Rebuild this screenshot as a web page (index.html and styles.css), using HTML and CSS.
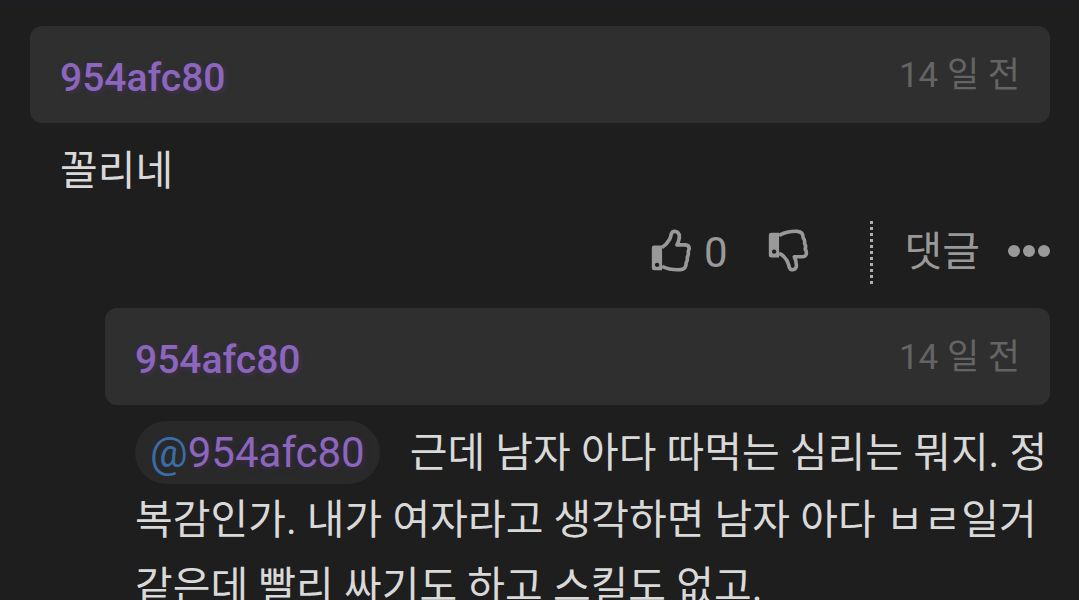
FILE: index.html
```html
<!DOCTYPE html>
<html lang="ko">
<head>
    <meta charset="UTF-8">
    <meta name="viewport" content="width=device-width, initial-scale=1.0">
    <title>댓글</title>
    <link rel="stylesheet" href="styles.css">
</head>
<body>

<main class="comments">
    <!-- Comment -->
    <article class="comment">
        <header class="comment-header">
            <a href="#" class="author">954afc80</a>
            <time class="date">14 일 전</time>
        </header>
        <p class="comment-text">꼴리네</p>
        <div class="actions">
            <button type="button" class="vote" aria-label="추천">
                <svg class="thumb" viewBox="33 55 123 130" aria-hidden="true">
                    <path class="cuff" fill-rule="evenodd" d="M42 105H66V180H42Q35 180 35 173V112Q35 105 42 105ZM51 157a6.500 6.500 0 1 0 .1 0Z"/>
                    <path class="hand" d="M66 111Q79 103 89 86Q92 80 94 69Q97 62 104 62Q120 64 118 82Q117 91 111 103H136Q148 104 148 114L145 124Q147 131 142 141Q144 148 139 157Q139 177 122 178Q91 180 66 168"/>
                </svg>
                <span>0</span>
            </button>
            <button type="button" class="vote" aria-label="비추천">
                <svg class="thumb" viewBox="382 55 123 130" aria-hidden="true">
                    <path class="cuff" fill-rule="evenodd" d="M391 66H415V141H391Q384 141 384 134V73Q384 66 391 66ZM400 117a6.500 6.500 0 1 0 .1 0Z"/>
                    <path class="hand" d="M415 74Q440 61 470 62Q488 63 488 82Q494 88 492 99Q497 106 494 116Q499 123 497 131Q495 138 485 139H461Q469 154 467 170Q464 179 453 178Q446 177 444 163Q440 149 430 139Q423 131 415 129"/>
                </svg>
            </button>
            <div class="links">
                <button type="button" class="reply-button">댓글</button>
                <button type="button" class="more" aria-label="더보기">
                    <svg viewBox="0 0 42 12" aria-hidden="true">
                        <circle cx="6" cy="6" r="6"/>
                        <circle cx="21" cy="6" r="6"/>
                        <circle cx="36" cy="6" r="6"/>
                    </svg>
                </button>
            </div>
        </div>
    </article>

    <!-- Reply -->
    <article class="comment reply">
        <header class="comment-header">
            <a href="#" class="author">954afc80</a>
            <time class="date">14 일 전</time>
        </header>
        <p class="comment-text"><a href="#" class="mention">@<span>954afc80</span></a>근데 남자 아다 따먹는 심리는 뭐지. 정복감인가. 내가 여자라고 생각하면 남자 아다 ㅂㄹ일거 같은데 빨리 싸기도 하고 스킬도 없고.</p>
    </article>
</main>

</body>
</html>
```

FILE: styles.css
```css
html {
    scrollbar-width: none;
}
body {
    margin: 0;
    background: #1e1e1e;
    color: #d9d9d9;
    font-family: Roboto, 'Noto Sans CJK KR', sans-serif;
    font-size: 41px;
    line-height: 67px;
    border-top: 2px solid #1b1f24;
}
a {
    text-decoration: none;
}
button {
    margin: 0;
    padding: 0;
    border: none;
    background: none;
    color: inherit;
    font: inherit;
    line-height: 63px;
    cursor: pointer;
}

.comments {
    padding: 24px 29px 0 30px;
}
.comment-header {
    display: flex;
    align-items: center;
    justify-content: space-between;
    height: 97px;
    padding: 0 30px;
    border-radius: 12px;
    background: #2f2f2f;
}
.author {
    padding-top: 8px;
    color: #8c66bd;
    font-size: 39px;
    font-weight: 500;
    text-shadow: 2px 2px 5px #41324f;
}
.date {
    padding-top: 2px;
    color: #646464;
    font-size: 35px;
}
.comment-text {
    margin: 0;
    padding: 15px 0 0 30px;
    word-break: break-all;
}

/* Votes and links */
.actions {
    display: flex;
    align-items: center;
    justify-content: flex-end;
    margin-top: 16px;
    color: #999999;
}
.vote {
    display: flex;
    align-items: center;
    gap: 12px;
    margin-right: 40px;
    font-size: 42px;
}
.thumb {
    width: 41px;
    height: 43px;
    margin-bottom: 4px;
}
.cuff {
    fill: #999999;
}
.hand {
    fill: none;
    stroke: #999999;
    stroke-width: 11px;
    stroke-linejoin: round;
}
.links {
    display: flex;
    align-items: center;
    gap: 28px;
    height: 63px;
    margin-left: 21px;
    padding-left: 32px;
    border-left: 3px dotted #b0b0b0;
}
.more {
    display: flex;
    padding-bottom: 4px;
}
.more svg {
    width: 42px;
    height: 12px;
    fill: #999999;
}

.reply {
    margin-top: 24px;
    padding-left: 75px;
}
.mention {
    margin-right: 30px;
    padding: 7px 15px;
    border-radius: 32px;
    background: #292929;
    color: #3a6ca8;
}
.reply .comment-text {
    padding-top: 14px;
}
.mention {
    font-size: 42px;
}
.mention span {
    color: #8c66bd;
    text-shadow: 2px 2px 5px #382b44;
}
```
